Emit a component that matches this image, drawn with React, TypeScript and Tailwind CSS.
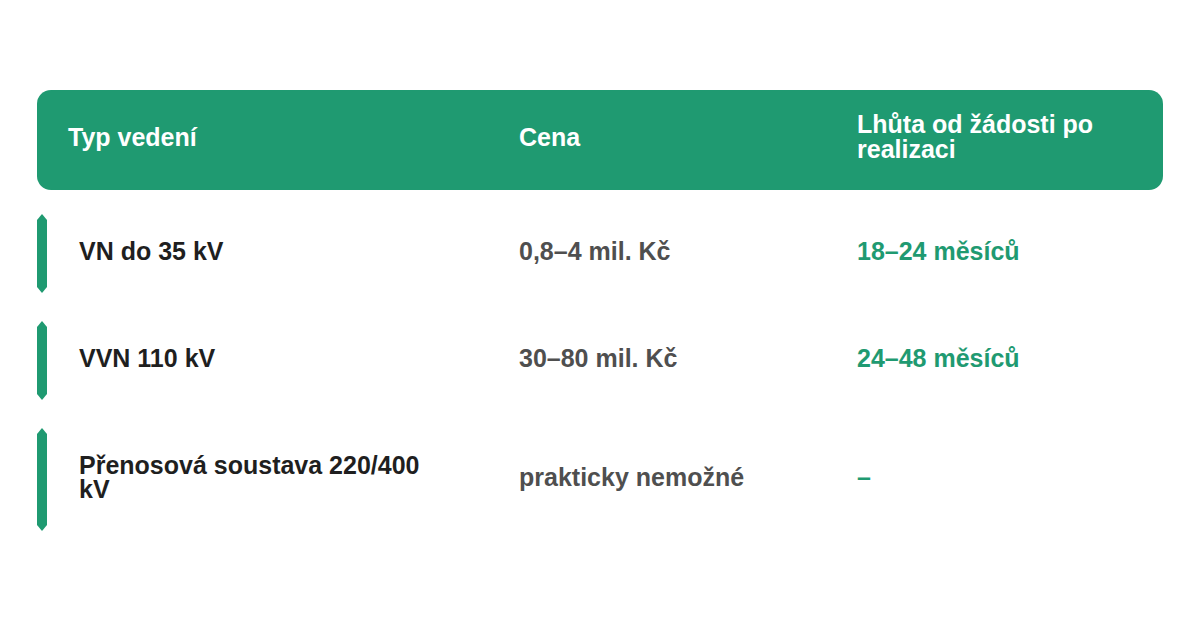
import React from 'react';

interface Row {
  type: string;
  price: string;
  term: string;
}

const rows: Row[] = [
  { type: 'VN do 35 kV', price: '0,8–4 mil. Kč', term: '18–24 měsíců' },
  { type: 'VVN 110 kV', price: '30–80 mil. Kč', term: '24–48 měsíců' },
  { type: 'Přenosová soustava 220/400 kV', price: 'prakticky nemožné', term: '–' },
];

// zelený proužek se špičatými konci
function Bar() {
  return (
    <div className="w-[10px] shrink-0 self-stretch bg-[#1f9a71] [clip-path:polygon(50%_0,100%_6px,100%_calc(100%-6px),50%_100%,0_calc(100%-6px),0_6px)]" />
  );
}

export default function App() {
  return (
    <div className="min-h-[630px] w-[1200px] bg-white pt-[90px] font-['Liberation_Sans',Arial,sans-serif] text-[25px] font-bold leading-[24px]">
      <div className="mx-[37px]">
        {/* hlavička tabulky */}
        <div className="grid h-[100px] grid-cols-[450px_338px_1fr] items-center rounded-[14px] bg-[#1f9a71] text-white">
          <div className="pb-[6px] pl-[31px]">Typ vedení</div>
          <div className="pb-[6px] pl-8">Cena</div>
          <div className="pb-[6px] pl-8 pr-8 leading-[25px]">Lhůta od žádosti po realizaci</div>
        </div>

        <div className="mt-6 flex flex-col gap-7">
          {rows.map((row) => (
            <div key={row.type} className="grid grid-cols-[450px_338px_1fr] items-center">
              <div className="flex items-stretch">
                <Bar />
                <div className="pt-[25px] pb-[30px] pl-8 pr-[40px] text-[#1f1f1f]">{row.type}</div>
              </div>
              <div className="pb-[6px] pl-8 text-[#4f4f4f]">{row.price}</div>
              <div className="pb-[6px] pl-8 text-[#1f9a71]">{row.term}</div>
            </div>
          ))}
        </div>
      </div>
    </div>
  );
}
